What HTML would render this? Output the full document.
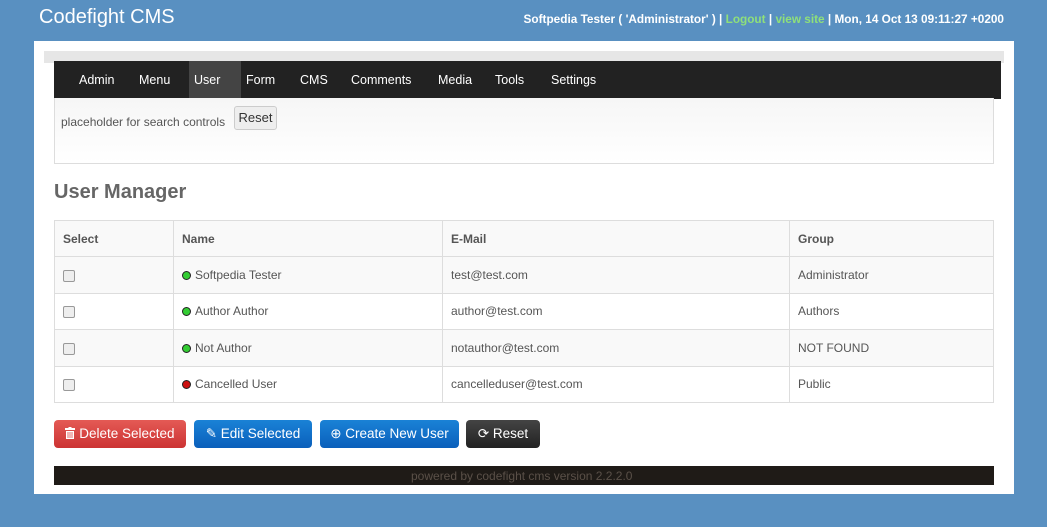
<!DOCTYPE html>
<html><head><meta charset="utf-8"><style>
*{box-sizing:border-box;margin:0;padding:0}
body{width:1047px;height:527px;background:#5990c1;font-family:"Liberation Sans",sans-serif;position:relative;overflow:hidden}
.abs{position:absolute}
.logo{left:39px;top:6px;color:#fff;font-size:20px}
.top{right:43px;top:12px;color:#fff;font-size:11.8px;font-weight:bold}
.top a{color:#8fe07a;text-decoration:none}
.panel{left:34px;top:41px;width:980px;height:453px;background:#fff}
.grey{left:44px;top:51px;width:960px;height:12px;background:#e6e6e6}
.nav{left:54px;top:61px;width:947px;height:38px;background:#222;color:#fff;font-size:12.5px}
.nav span{position:absolute;top:12px}
.navsel{left:189px;top:61px;width:52px;height:38px;background:#444}
.search{left:54px;top:98px;width:940px;height:66px;border:1px solid #ddd;border-top:none;background:linear-gradient(#f6f6f6,#fff);font-size:12px;color:#555}
.rbtn{position:absolute;left:179px;top:8px;width:43px;height:24px;border:1px solid #ccc;border-radius:3px;background:#eee;font-size:13px;color:#333;text-align:center;line-height:22px}
h2{left:54px;top:181px;font-size:20px;color:#666;font-weight:bold}
table{position:absolute;left:54px;top:220px;width:940px;border-collapse:collapse;border:1px solid #ddd;font-size:12px;color:#555}
td,th{border-left:1px solid #ddd;border-top:1px solid #ddd;text-align:left;padding:0 8px;height:36.5px}
th{font-weight:bold;color:#555;height:36px}
tr:nth-child(even) td{background:#f9f9f9}
th{background:#f9f9f9}
.cb{display:inline-block;width:12px;height:12px;border:1px solid #999;border-radius:2px;background:#eee;vertical-align:middle}
.dot{display:inline-block;width:9px;height:9px;border-radius:50%;background:#3c3;border:1px solid #222;margin-right:4px;vertical-align:-1px}
.btn{position:absolute;top:420px;height:28px;border-radius:4px;color:#fff;font-size:13.5px;line-height:28px;text-align:center}
.foot{left:54px;top:466px;width:940px;height:19px;background:#1f1b17;color:#5a5048;font-size:12px;line-height:20px;padding-left:357px}
</style></head><body>
<div class="abs logo">Codefight CMS</div>
<div class="abs top">Softpedia Tester ( 'Administrator' ) | <a>Logout</a> | <a>view site</a> | Mon, 14 Oct 13 09:11:27 +0200</div>
<div class="abs panel"></div>
<div class="abs grey"></div>
<div class="abs nav"></div>
<div class="abs navsel"></div>
<div class="abs nav" style="background:none"><span style="left:25px">Admin</span><span style="left:85px">Menu</span><span style="left:140px">User</span><span style="left:192px">Form</span><span style="left:246px">CMS</span><span style="left:297px">Comments</span><span style="left:384px">Media</span><span style="left:441px">Tools</span><span style="left:497px">Settings</span></div>
<div class="abs search"><span style="position:absolute;left:6px;top:17px">placeholder for search controls</span><div class="rbtn">Reset</div></div>
<h2 class="abs">User Manager</h2>
<table>
<tr><th style="width:119px">Select</th><th style="width:269px">Name</th><th style="width:347px">E-Mail</th><th>Group</th></tr>
<tr><td><span class="cb"></span></td><td><span class="dot"></span>Softpedia Tester</td><td>test@test.com</td><td>Administrator</td></tr>
<tr><td><span class="cb"></span></td><td><span class="dot"></span>Author Author</td><td>author@test.com</td><td>Authors</td></tr>
<tr><td><span class="cb"></span></td><td><span class="dot"></span>Not Author</td><td>notauthor@test.com</td><td>NOT FOUND</td></tr>
<tr><td><span class="cb"></span></td><td><span class="dot" style="background:#c11"></span>Cancelled User</td><td>cancelleduser@test.com</td><td>Public</td></tr>
</table>
<div class="btn" style="left:54px;width:132px;background:linear-gradient(#e45a55,#c33);"><svg width="10" height="12" viewBox="0 0 10 12" style="vertical-align:-1px"><rect x="0" y="1" width="10" height="2" fill="#fff"/><rect x="3.5" y="0" width="3" height="1.5" fill="#fff"/><path d="M1 4h8v8H1z" fill="#fff"/><path d="M3 5v6M5 5v6M7 5v6" stroke="#d44" stroke-width="0.8"/></svg> Delete Selected</div>
<div class="btn" style="left:194px;width:118px;background:linear-gradient(#1a82d6,#0a5fbb);">✎ Edit Selected</div>
<div class="btn" style="left:320px;width:139px;background:linear-gradient(#1a82d6,#0a5fbb);">⊕ Create New User</div>
<div class="btn" style="left:466px;width:74px;background:linear-gradient(#444,#222);">⟳ Reset</div>
<div class="abs foot">powered by codefight cms version 2.2.2.0</div>
</body></html>
